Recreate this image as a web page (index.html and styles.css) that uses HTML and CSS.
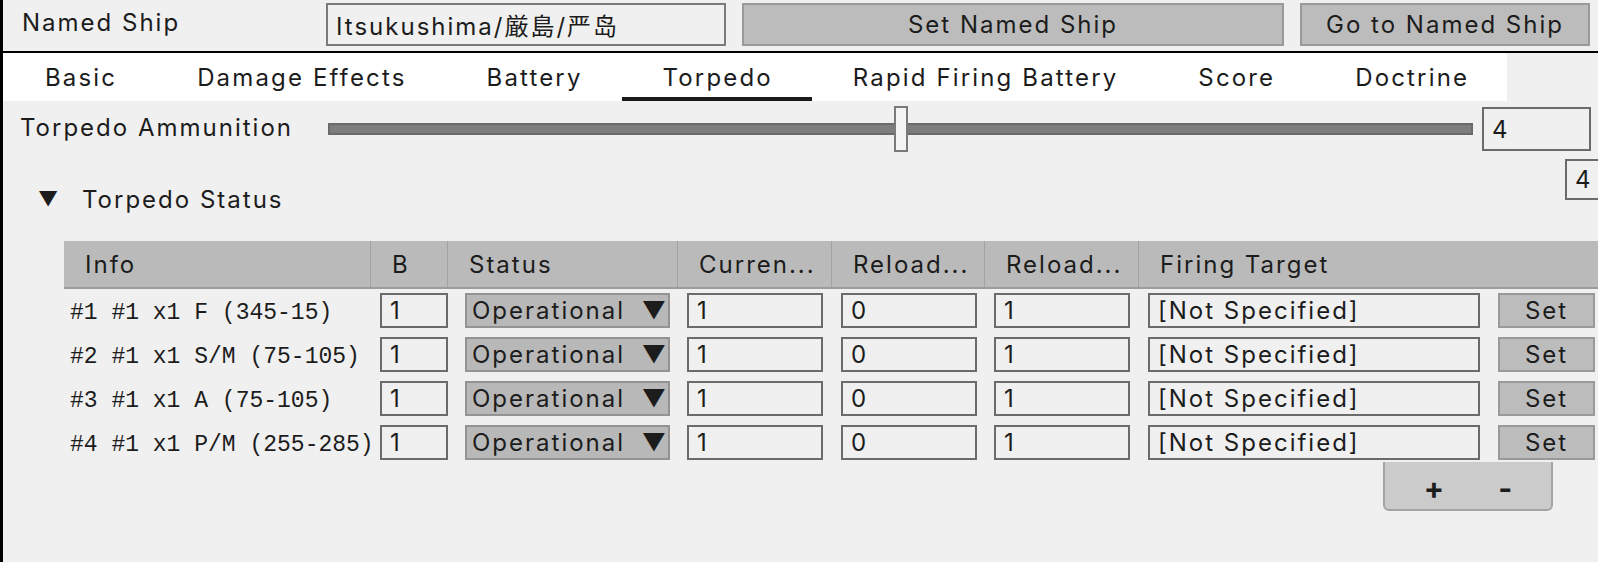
FILE: index.html
```html
<!DOCTYPE html>
<html lang="en">
<head>
    <meta charset="UTF-8">
    <title>Ship Editor - Torpedo</title>
    <link rel="stylesheet" href="styles.css">
</head>
<body>
    <div class="window">
        <div class="topbar">
            <span class="label">Named Ship</span>
            <div class="field name-field">Itsukushima/厳島/严岛</div>
            <button class="btn">Set Named Ship</button>
            <button class="btn">Go to Named Ship</button>
        </div>
        <div class="tabs">
            <div class="tab">Basic</div>
            <div class="tab">Damage Effects</div>
            <div class="tab">Battery</div>
            <div class="tab active">Torpedo</div>
            <div class="tab">Rapid Firing Battery</div>
            <div class="tab">Score</div>
            <div class="tab">Doctrine</div>
        </div>
        <div class="slider-row">
            <span class="label">Torpedo Ammunition</span>
            <div class="slider">
                <div class="track"></div>
                <div class="thumb" style="left: 50%"></div>
            </div>
            <div class="field num">4</div>
        </div>
        <div class="status-head">
            <div class="foldout">
                <span class="arrow">▼</span>
                <span>Torpedo Status</span>
            </div>
            <div class="field stray">4</div>
        </div>
        <div class="table">
            <div class="thead">
                <div class="th">Info</div>
                <div class="th">B</div>
                <div class="th">Status</div>
                <div class="th">Curren...</div>
                <div class="th">Reload...</div>
                <div class="th">Reload...</div>
                <div class="th last">Firing Target</div>
            </div>
            <div class="tr">
                <div class="td info">#1 #1 x1 F (345-15)</div>
                <div class="td"><div class="field cell-b">1</div></div>
                <div class="td"><div class="dropdown">Operational<span class="caret">▼</span></div></div>
                <div class="td"><div class="field cell-n">1</div></div>
                <div class="td"><div class="field cell-n">0</div></div>
                <div class="td"><div class="field cell-n">1</div></div>
                <div class="td target"><div class="field cell-t">[Not Specified]</div><button class="btn set">Set</button></div>
            </div>
            <div class="tr">
                <div class="td info">#2 #1 x1 S/M (75-105)</div>
                <div class="td"><div class="field cell-b">1</div></div>
                <div class="td"><div class="dropdown">Operational<span class="caret">▼</span></div></div>
                <div class="td"><div class="field cell-n">1</div></div>
                <div class="td"><div class="field cell-n">0</div></div>
                <div class="td"><div class="field cell-n">1</div></div>
                <div class="td target"><div class="field cell-t">[Not Specified]</div><button class="btn set">Set</button></div>
            </div>
            <div class="tr">
                <div class="td info">#3 #1 x1 A (75-105)</div>
                <div class="td"><div class="field cell-b">1</div></div>
                <div class="td"><div class="dropdown">Operational<span class="caret">▼</span></div></div>
                <div class="td"><div class="field cell-n">1</div></div>
                <div class="td"><div class="field cell-n">0</div></div>
                <div class="td"><div class="field cell-n">1</div></div>
                <div class="td target"><div class="field cell-t">[Not Specified]</div><button class="btn set">Set</button></div>
            </div>
            <div class="tr">
                <div class="td info">#4 #1 x1 P/M (255-285)</div>
                <div class="td"><div class="field cell-b">1</div></div>
                <div class="td"><div class="dropdown">Operational<span class="caret">▼</span></div></div>
                <div class="td"><div class="field cell-n">1</div></div>
                <div class="td"><div class="field cell-n">0</div></div>
                <div class="td"><div class="field cell-n">1</div></div>
                <div class="td target"><div class="field cell-t">[Not Specified]</div><button class="btn set">Set</button></div>
            </div>
        </div>
        <div class="list-footer">
            <div class="addremove">
                <span>+</span>
                <span>-</span>
            </div>
        </div>
    </div>
</body>
</html>
```

FILE: styles.css
```css
body{
    margin: 0;
    height: 562px;
    overflow: hidden;
    background: #f0f0f0;
    font-family: Inter, "Noto Sans CJK JP", sans-serif;
    font-size: 24px;
    letter-spacing: 2px;
    color: #1c1c1c;
}
.window{
    height: 100%;
    border-left: 3px solid #000;
    overflow: hidden;
}
.topbar{
    display: grid;
    grid-template-columns: 307px 400px 1fr 290px;
    column-gap: 16px;
    align-items: start;
    height: 51px;
    padding-right: 8px;
    border-bottom: 2px solid #000;
}
.topbar .label{
    padding-top: 8px;
}
.label{
    padding-left: 19px;
}
.field{
    box-sizing: border-box;
    border: 2px solid #6b6b6b;
    background: #f0f0f0;
    padding-left: 8px;
    display: flex;
    align-items: center;
    white-space: nowrap;
}
.name-field{
    height: 43px;
    margin-top: 3px;
    border-color: #7a7a7a;
}
.btn{
    box-sizing: border-box;
    height: 43px;
    border: 2px solid #999;
    background: #bcbcbc;
    font: inherit;
    letter-spacing: inherit;
    color: inherit;
    padding: 0;
}
.topbar .btn{
    margin-top: 3px;
}
.tabs{
    display: flex;
    width: 1504px;
    height: 48px;
    padding-left: 1px;
    box-sizing: border-box;
    background: #fff;
}
.tab{
    padding: 4px 39px 0 41px;
    display: flex;
    align-items: center;
    box-sizing: border-box;
    border-bottom: 4px solid transparent;
    white-space: nowrap;
    letter-spacing: 2.15px;
}
.tab.active{
    border-bottom-color: #1a1a1a;
}
.slider-row{
    display: grid;
    grid-template-columns: 316px 1145px 109px;
    column-gap: 9px;
    align-items: center;
    height: 56px;
}
.slider-row .label{
    padding-left: 17px;
    padding-bottom: 4px;
}
.slider{
    position: relative;
    height: 46px;
}
.track{
    position: absolute;
    left: 0;
    right: 0;
    top: 17px;
    height: 12px;
    box-sizing: border-box;
    border: 2px solid #6a6a6a;
    background: #7d7d7d;
}
.thumb{
    position: absolute;
    top: 0;
    width: 14px;
    height: 46px;
    box-sizing: border-box;
    border: 2px solid #7a7a7a;
    background: #f4f4f4;
    transform: translateX(-50%);
}
.num{
    height: 44px;
}
.status-head{
    display: flex;
    justify-content: space-between;
    align-items: flex-start;
    height: 64px;
}
.foldout{
    display: flex;
    align-items: center;
    height: 40px;
    margin-top: 22px;
}
.arrow{
    width: 79px;
    box-sizing: border-box;
    padding-left: 35px;
    font-size: 20px;
    letter-spacing: 0;
}
.stray{
    width: 45px;
    height: 41px;
    margin-top: 2px;
    margin-right: -12px;
}
.table{
    margin-left: 61px;
    margin-top: 20px;
}
.thead, .tr{
    display: grid;
    grid-template-columns: 307px 77px 230px 154px 153px 154px 1fr;
}
.thead{
    height: 46px;
    background: #bababa;
    border-bottom: 2px solid #9c9c9c;
}
.th{
    display: flex;
    align-items: center;
    padding-left: 21px;
    border-right: 1px solid #a2a2a2;
    white-space: nowrap;
}
.th.last{
    border-right: 0;
}
.tr{
    height: 44px;
    align-items: start;
}
.td{
    display: flex;
    padding-top: 4px;
    padding-left: 9px;
}
.td .field, .dropdown, .set{
    height: 35px;
}
.info{
    font-family: "Liberation Mono", monospace;
    font-size: 23px;
    letter-spacing: 0px;
    padding-left: 6px;
    padding-top: 11px;
    white-space: nowrap;
}
.cell-b{
    width: 68px;
}
.cell-n{
    width: 136px;
}
.cell-t{
    width: 332px;
}
.dropdown{
    box-sizing: border-box;
    width: 205px;
    margin-left: 8px;
    border: 2px solid #939393;
    background: #b8b8b8;
    padding-left: 5px;
    display: flex;
    align-items: center;
    justify-content: space-between;
    white-space: nowrap;
}
.caret{
    padding-right: 2px;
    letter-spacing: 0;
}
.target{
    gap: 18px;
}
.set{
    width: 97px;
}
.list-footer{
    display: flex;
    justify-content: flex-end;
    padding-right: 45px;
    margin-top: -3px;
}
.addremove{
    display: flex;
    justify-content: center;
    gap: 54px;
    width: 170px;
    height: 49px;
    box-sizing: border-box;
    padding-top: 4px;
    background: #cbcbcb;
    border: 2px solid #a3a3a3;
    border-top: 0;
    border-radius: 0 0 6px 6px;
    font-weight: 700;
    font-size: 30px;
    letter-spacing: 0;
    align-items: center;
}
```
